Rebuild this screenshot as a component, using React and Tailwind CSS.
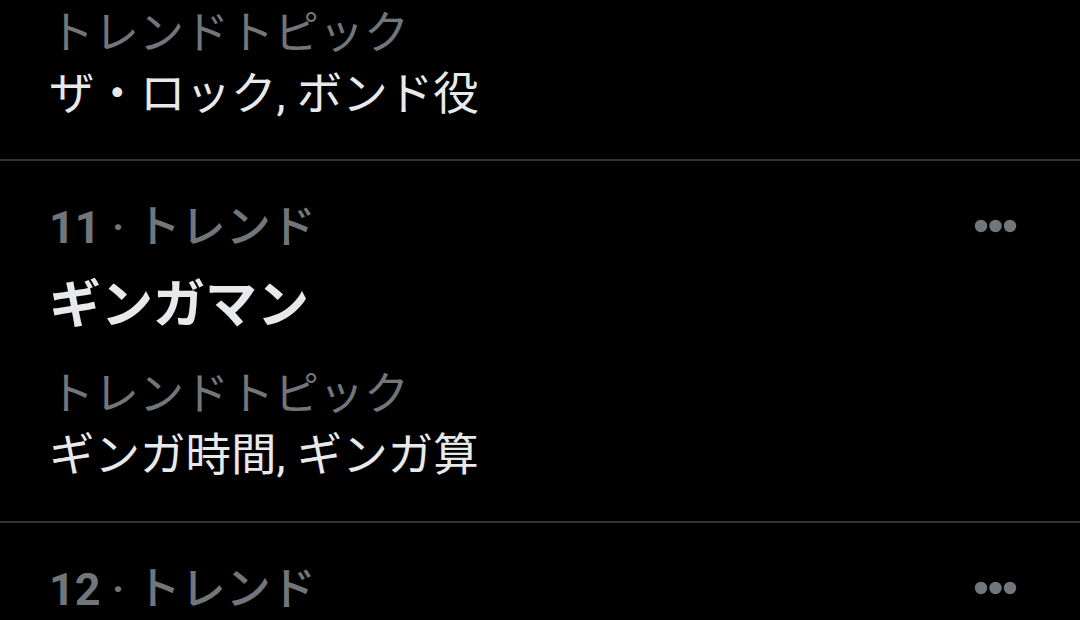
import React from 'react';

const font = { fontFamily: "Roboto, 'Noto Sans CJK JP', sans-serif" };

const trends = [
  { rank: 11, name: 'ギンガマン', topics: 'ギンガ時間, ギンガ算' },
];

const Dots = () => (
  <svg width="44" height="14" viewBox="0 0 44 14" className="shrink-0 mb-[4px]">
    <circle cx="7" cy="7" r="6.2" fill="#71767b" />
    <circle cx="21.5" cy="7" r="6.2" fill="#71767b" />
    <circle cx="36" cy="7" r="6.2" fill="#71767b" />
  </svg>
);

const TopicBlock = ({ topics }) => (
  <div className="flex flex-col">
    <div className="text-[45px] leading-[54px] text-[#71767b]">トレンドトピック</div>
    <div className="text-[45.5px] leading-[54px] text-[#e7e9ea] mt-[7px]">{topics}</div>
  </div>
);

const Header = ({ rank }) => (
  <div className="flex items-center justify-between h-[54px]">
    <div className="text-[45px] leading-[54px] text-[#71767b] font-medium">
      <span className="font-bold">{rank}</span> · トレンド
    </div>
    <Dots />
  </div>
);

const TrendRow = ({ rank, name, topics }) => (
  <div className="border-b-2 border-[#2f3336] pl-[49px] pr-[62px] pt-[40px] pb-[38px]">
    <Header rank={rank} />
    <div className="text-[52px] leading-[60px] font-bold text-[#e7e9ea] mt-[21px]">{name}</div>
    <div className="mt-[32px]">
      <TopicBlock topics={topics} />
    </div>
  </div>
);

export default function App() {
  return (
    <div className="w-[1080px] h-[620px] overflow-hidden bg-black" style={font}>
      <div className="border-b-2 border-[#2f3336] pl-[49px] pr-[62px] pt-[7px] pb-[37px]">
        <TopicBlock topics="ザ・ロック, ボンド役" />
      </div>
      {trends.map((t) => (
        <TrendRow key={t.rank} {...t} />
      ))}
      <div className="pl-[49px] pr-[62px] pt-[40px]">
        <Header rank={12} />
      </div>
    </div>
  );
}
